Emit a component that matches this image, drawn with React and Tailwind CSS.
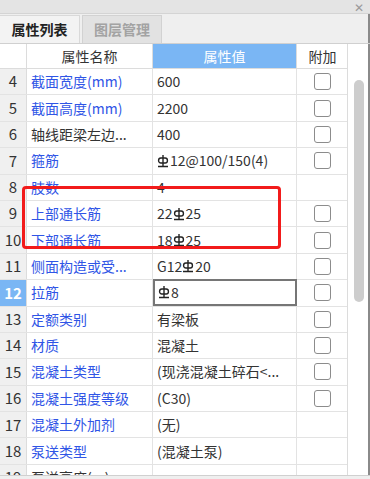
import React from 'react';

// rebar grade symbol (HRB400)
function Rebar() {
  return (
    <svg width="12" height="14" viewBox="0 0 12 14" className="inline-block align-[-1px] mr-[1px]">
      <path d="M6 1v12M1 12.5h10" stroke="#222" strokeWidth="1.4" fill="none" />
      <rect x="1.6" y="4" width="8.8" height="5" rx="2.2" stroke="#222" strokeWidth="1.4" fill="none" />
    </svg>
  );
}

const rows = [
  { n: 4, name: '截面宽度(mm)', value: '600', box: true },
  { n: 5, name: '截面高度(mm)', value: '2200', box: true },
  { n: 6, name: '轴线距梁左边...', value: '400', box: true, black: true },
  { n: 7, name: '箍筋', value: <><Rebar />12@100/150(4)</>, box: true },
  { n: 8, name: '肢数', value: '4', box: false },
  { n: 9, name: '上部通长筋', value: <>22<Rebar />25</>, box: true },
  { n: 10, name: '下部通长筋', value: <>18<Rebar />25</>, box: true },
  { n: 11, name: '侧面构造或受...', value: <>G12<Rebar />20</>, box: true },
  { n: 12, name: '拉筋', value: <><Rebar />8</>, box: true, active: true },
  { n: 13, name: '定额类别', value: '有梁板', box: true },
  { n: 14, name: '材质', value: '混凝土', box: true },
  { n: 15, name: '混凝土类型', value: '(现浇混凝土碎石<...', box: true },
  { n: 16, name: '混凝土强度等级', value: '(C30)', box: true },
  { n: 17, name: '混凝土外加剂', value: '(无)', box: false },
  { n: 18, name: '泵送类型', value: '(混凝土泵)', box: false },
  { n: 19, name: '泵送高度(m)', value: '', box: false, black: true },
];

export default function App() {
  return (
    <div className="relative w-[370px] h-[479px] overflow-hidden bg-[#efefef] text-[14px] text-[#222]"
      style={{ fontFamily: '"Noto Sans CJK SC", "Noto Sans", sans-serif' }}>
      {/* title bar */}
      <div className="h-[14px] bg-[#e4e4e4] border-b border-[#d4d4d4] flex items-center justify-end pr-[6px]">
        <span className="text-[12px] leading-[12px] text-[#9a9a9a]">✕</span>
      </div>

      {/* tabs */}
      <div className="h-[29px] bg-[#efefef] flex items-end border-r-2 border-[#8a8a8a]">
        <div className="w-[80px] h-[28px] flex items-center justify-center bg-[#f3f3f3] border-r border-t border-[#d9d9d9] font-bold text-[14px] text-[#222]">
          属性列表
        </div>
        <div className="ml-[2px] w-[80px] h-[28px] flex items-center justify-center bg-[#e2e2e2] border border-[#d2d2d2] border-b-0 font-bold text-[14px] text-[#a3a3a3]">
          图层管理
        </div>
      </div>

      <div className="flex h-[433px] bg-white border-t border-b border-[#d0d0d0]">
        {/* grid */}
        <div className="w-[348px] border-r border-[#dcdcdc] overflow-hidden">
          <div className="grid grid-cols-[27px_126px_144px_51px] h-[25px] border-b border-[#dcdcdc]">
            <div className="border-r border-[#dcdcdc] bg-white" />
            <div className="border-r border-[#dcdcdc] flex items-center justify-center text-[#333]">属性名称</div>
            <div className="bg-[#7ab6f4] border-r border-[#dcdcdc] flex items-center justify-center text-white">属性值</div>
            <div className="flex items-center justify-center text-[#333]">附加</div>
          </div>
          {rows.map(r => (
            <div key={r.n} className="grid grid-cols-[27px_126px_144px_51px] h-[26.4px] border-b border-[#e3e3e3]">
              <div className={`flex items-center justify-center border-r border-[#dcdcdc] text-[15px] ${r.active ? 'bg-[#7ab6f4] text-white font-bold' : 'bg-[#f0f0f0] text-[#333]'}`}>
                {r.n}
              </div>
              <div className={`flex items-center pl-[4px] border-r border-[#e3e3e3] whitespace-nowrap overflow-hidden ${r.black ? 'text-[#333]' : 'text-[#2f55e6]'}`}>
                {r.name}
              </div>
              {r.active ? (
                <div className="flex items-center pl-[3px] -mt-px border-2 border-[#767676] whitespace-nowrap overflow-hidden text-[#333]">
                  {r.value}
                </div>
              ) : (
                <div className="flex items-center pl-[4px] border-r border-[#e3e3e3] whitespace-nowrap overflow-hidden text-[#333]">
                  {r.value}
                </div>
              )}
              <div className="flex items-center justify-center">
                {r.box && <div className="w-[17px] h-[17px] rounded-[3px] border border-[#8c8c8c] bg-white" />}
              </div>
            </div>
          ))}
        </div>
        {/* scrollbar */}
        <div className="flex-1 bg-white border-r-2 border-[#8a8a8a] pl-[6px] pt-[36px]">
          <div className="w-[10px] h-[222px] rounded-full bg-[#cdcdcd]" />
        </div>
      </div>

      {/* highlight */}
      <div className="absolute left-[22px] top-[186px] w-[259px] h-[63px] border-[3px] border-[#f21b1b] rounded-[4px]" />
    </div>
  );
}
